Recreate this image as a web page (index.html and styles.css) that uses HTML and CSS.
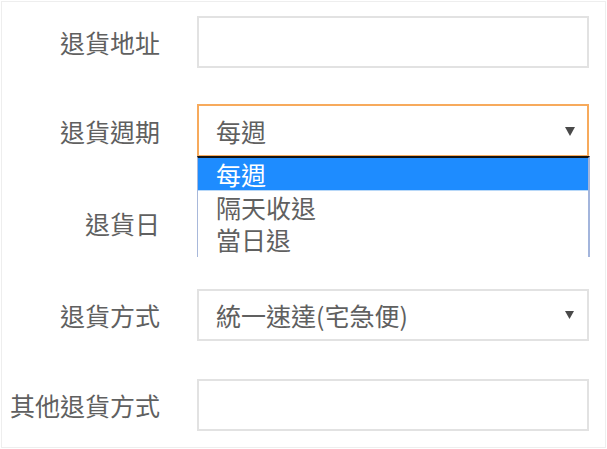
FILE: index.html
```html
<!DOCTYPE html>
<html lang="zh-Hant">
<head>
<meta charset="utf-8">
<title>退貨設定</title>
<link rel="stylesheet" href="styles.css">
</head>
<body>
<div class="panel">
  <div class="form">
    <div class="row">
      <label class="label">退貨地址</label>
      <div class="field input"></div>
    </div>
    <div class="row row--near">
      <label class="label">退貨週期</label>
      <div class="field select select--open">
        <span class="value">每週</span>
        <svg class="arrow" width="10" height="10" viewBox="0 0 10 10"><path d="M0 1 L10 1 L5 10 Z" fill="#4a4a4a"/></svg>
        <ul class="options">
          <li class="option option--selected">每週</li>
          <li class="option">隔天收退</li>
          <li class="option">當日退</li>
        </ul>
      </div>
    </div>
    <div class="row row--far">
      <label class="label">退貨日</label>
      <div class="field input"></div>
    </div>
    <div class="row row--far">
      <label class="label">退貨方式</label>
      <div class="field select">
        <span class="value">統一速達(宅急便)</span>
        <svg class="arrow arrow--small" width="9" height="8" viewBox="0 0 9 8"><path d="M0 0 L9 0 L4.5 8 Z" fill="#4a4a4a"/></svg>
      </div>
    </div>
    <div class="row">
      <label class="label">其他退貨方式</label>
      <div class="field input"></div>
    </div>
  </div>
</div>
</body>
</html>
```

FILE: styles.css
```css
* {
  box-sizing: border-box;
}

html, body {
  margin: 0;
  padding: 0;
  background: #ffffff;
}

body {
  font-family: "Noto Sans CJK TC", "Noto Sans", sans-serif;
  color: #606060;
}

.panel {
  margin: 1px 0 0 1px;
  width: 605px;
  height: 447px;
  border: 1px solid #eeeeee;
  background: #ffffff;
}

.form {
  display: flex;
  flex-direction: column;
  padding-top: 14px;
}

.row {
  display: flex;
  align-items: center;
  gap: 37px;
  height: 52px;
}

.row + .row {
  margin-top: 38px;
}

.row.row--near {
  margin-top: 36px;
  height: 53px;
}

.row.row--far {
  margin-top: 40px;
}

.label {
  width: 158px;
  flex: none;
  text-align: right;
  font-size: 25px;
  line-height: 30px;
  color: #606060;
  white-space: nowrap;
}

.field {
  width: 392px;
  height: 100%;
  flex: none;
  border: 2px solid #e2e2e2;
  background: #ffffff;
}

.select {
  position: relative;
  display: flex;
  align-items: center;
  padding: 0 12px 0 17px;
}

.select--open {
  border-color: #f7aa5c;
  z-index: 2;
}

.value {
  flex: 1;
  font-size: 25px;
  line-height: 30px;
  color: #606060;
  white-space: nowrap;
}

.arrow {
  flex: none;
  display: block;
}

.arrow--small {
  margin-right: 1px;
}

.options {
  position: absolute;
  left: -2px;
  right: -3px;
  top: calc(100% + 1px);
  margin: 0;
  padding: 0 0 2px;
  list-style: none;
  background: #ffffff;
  border-top: 2px solid #151515;
  border-left: 1px solid #a8b8da;
  border-right: 2px solid #a3b5dc;
}

.option {
  height: 32px;
  padding-left: 18px;
  font-size: 25px;
  line-height: 32px;
  color: #606060;
  white-space: nowrap;
}

.option--selected {
  height: 33px;
  line-height: 33px;
  background: #1e8cff;
  color: #ffffff;
  border-bottom: 1px solid #b8d8f8;
}
```
